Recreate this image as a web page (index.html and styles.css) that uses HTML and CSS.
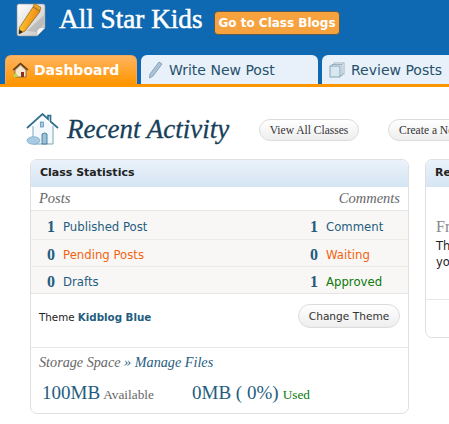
FILE: index.html
```html
<!DOCTYPE html>
<html lang="en">
<head>
<meta charset="utf-8">
<title>All Star Kids</title>
<link rel="stylesheet" href="styles.css">
</head>
<body>
<header class="masthead">
  <div class="brand">
    <svg class="logo" width="32" height="38" viewBox="0 0 32 38">
      <defs>
        <linearGradient id="paper" x1="0" y1="0" x2="1" y2="1"><stop offset="0" stop-color="#ffffff"/><stop offset="1" stop-color="#c4c4c4"/></linearGradient>
        <linearGradient id="pencil" x1="0" y1="0" x2="1" y2="0.400"><stop offset="0" stop-color="#ffd93f"/><stop offset="1" stop-color="#ec8210"/></linearGradient>
      </defs>
      <path d="M5 4h24q2 0 2 2v22l-8 8H5q-2 0-2-2V6q0-2 2-2z" fill="url(#paper)" stroke="#8f8f8f" stroke-width=".6"/>
      <path d="M31 28l-8 8q-1-6 1-8q3-1 7 0z" fill="#f6f6f6" stroke="#a5a5a5" stroke-width=".5"/>
      <path d="M30 15L13 31l9 1 8-8z" fill="#a8a8a8" opacity=".55"/>
      <path d="M19 7l7 4.500L11 31l-6 3 .500-6.500z" fill="url(#pencil)" stroke="#7a4b00" stroke-width=".6"/>
      <path d="M20.500 3.500l6.500 4-1 3.500-7-4.500z" fill="#e9a32a" stroke="#7a4b00" stroke-width=".5"/>
      <path d="M5.300 29.500l3.500 2.500-3.800 2z" fill="#222"/>
    </svg>
    <h1 class="site-title">All Star Kids</h1>
    <a class="class-blogs">Go to Class Blogs</a>
  </div>
  <nav class="tabs">
    <a class="tab tab-active">
      <svg width="17" height="16" viewBox="0 0 17 16"><path d="M3 8l5.500-5L14 8v7H3z" fill="#f3e7cf" stroke="#6b4a2a" stroke-width=".7"/><path d="M1 8l7.500-6.500L16 8" fill="none" stroke="#5a3a20" stroke-width="1.600"/><path d="M9 10h3v5H9z" fill="#8b2f1f"/><circle cx="3.500" cy="13.500" r="2" fill="#b7d84b"/></svg>
      Dashboard
    </a>
    <a class="tab tab-write">
      <svg width="15" height="18" viewBox="0 0 15 18"><path d="M11 1l3 2L5 15l-3.500 2L2 13z" fill="#a9c3d8" stroke="#6d8ea8" stroke-width=".7"/></svg>
      Write New Post
    </a>
    <a class="tab tab-review">
      <svg width="16" height="16" viewBox="0 0 16 16"><rect x="5" y="1" width="10" height="11" fill="#f3f7fa" stroke="#8aa5b8" stroke-width=".8"/><rect x="3" y="2.500" width="10" height="11" fill="#eaf1f6" stroke="#8aa5b8" stroke-width=".8"/><rect x="1" y="4" width="10" height="11" fill="#d9e7f0" stroke="#6f93aa" stroke-width=".8"/></svg>
      Review Posts
    </a>
  </nav>
</header>

<main class="content">
  <div class="page-head">
    <svg class="house" width="33" height="33" viewBox="0 0 33 33">
      <path d="M7 14L17 5l10 9v17H7z" fill="#f2f8fc"/>
      <path d="M1 15L16.500 1 22 6V2.500h2.500v6L32 15" fill="none" stroke="#2f6f8f" stroke-width="1.700"/>
      <path d="M7 13v18h20V13" fill="none" stroke="#7ea6bb" stroke-width="1"/>
      <rect x="14.500" y="9" width="3" height="5" fill="#a9cbe0" stroke="#3b7ea3" stroke-width=".6"/>
      <path d="M16 31V21q3-2 5 0v10z" fill="#9cc3da" stroke="#2f6f8f" stroke-width=".8"/>
      <ellipse cx="7.500" cy="27.500" rx="6.500" ry="3.800" fill="#a8cbe3" stroke="#6a9cbc" stroke-width=".6"/>
    </svg>
    <h2 class="page-title">Recent Activity</h2>
    <a class="pill pill-view">View All Classes</a>
    <a class="pill pill-create">Create a New Class</a>
  </div>

  <div class="columns">
    <section class="card stats">
      <h3 class="card-title">Class Statistics</h3>
      <div class="stats-head"><span>Posts</span><span>Comments</span></div>
      <div class="stat-table">
        <div class="stat-row">
          <b class="num num-left">1</b><span class="label link">Published Post</span>
          <b class="num num-right">1</b><span class="label-right link">Comment</span>
        </div>
        <div class="stat-row">
          <b class="num num-left">0</b><span class="label pending">Pending Posts</span>
          <b class="num num-right">0</b><span class="label-right pending">Waiting</span>
        </div>
        <div class="stat-row">
          <b class="num num-left">0</b><span class="label link">Drafts</span>
          <b class="num num-right">1</b><span class="label-right approved">Approved</span>
        </div>
      </div>
      <div class="theme-row">
        <span class="theme-text">Theme <b class="link">Kidblog Blue</b></span>
        <a class="pill pill-theme">Change Theme</a>
      </div>
      <div class="storage">
        <p class="storage-title">Storage Space <span class="link">» Manage Files</span></p>
        <div class="storage-values">
          <span class="avail"><span class="big">100MB</span> <small>Available</small></span>
          <span class="used"><span class="big">0MB ( 0%)</span> <small>Used</small></span>
        </div>
      </div>
    </section>

    <section class="card recent">
      <h3 class="card-title">Recent Posts</h3>
      <div class="recent-body">
        <p class="from">From the Teacher</p>
        <p class="recent-text">There are no posts<br>you can review now</p>
      </div>
      <div class="recent-foot"></div>
    </section>
  </div>
</main>
</body>
</html>
```
FILE: styles.css
```css
* { box-sizing: border-box; }
html, body { margin: 0; padding: 0; height: 424px; overflow: hidden; background: #fff; }
body { width: 449px; font-family: "DejaVu Sans", sans-serif; color: #222; }
a { display: block; }
h1, h2, h3, p { margin: 0; font-weight: normal; }

.masthead { height: 87px; background: #0f69b2; border-bottom: 3px solid #ff9600; overflow: hidden; }
.brand { height: 55px; display: flex; align-items: flex-start; }
.logo { margin-left: 14px; flex: none; }
.site-title { margin-left: 13px; width: 155px; flex: none; font: 27.200px/38px "Liberation Serif", serif; -webkit-text-stroke: .5px #fff; color: #fff; white-space: nowrap; }
.class-blogs { margin-top: 11px; width: 126px; height: 24px; background: #f6a33f; border: 1px solid #5f5a4e; border-radius: 4px; font: bold 12px/22px "DejaVu Sans", sans-serif; color: #fff; text-align: center; white-space: nowrap; }

.tabs { display: flex; gap: 4px; padding-left: 5px; height: 29px; width: 600px; }
.tab { height: 29px; border-radius: 6px 6px 0 0; display: flex; align-items: center; gap: 6px; font-size: 14px; white-space: nowrap; background: #e8f1f9; color: #26506c; }
.tab svg { flex: none; }
.tab-active { width: 132px; padding-left: 6px; background: linear-gradient(#ffb45f, #ff9600); color: #fff; font-weight: bold; border: 1px solid #f0a860; border-bottom: 0; gap: 5px; }
.tab-write { width: 177px; padding-left: 7px; }
.tab-review { width: 160px; padding-left: 7px; }

.content { padding: 26px 0 0 26px; width: 700px; }
.page-head { display: flex; align-items: center; height: 33px; }
.house { flex: none; }
.page-title { margin-left: 8px; width: 192px; flex: none; font: italic 27px/33px "Liberation Serif", serif; -webkit-text-stroke: .3px #173f5a; color: #173f5a; white-space: nowrap; }
.pill { display: block; border: 1px solid #dcdcdc; border-radius: 12px; background: linear-gradient(#fff, #eeeeee); white-space: nowrap; text-align: center; }
.pill-view { width: 100px; height: 22px; font: 11.500px/20px "Liberation Serif", serif; color: #333; }
.pill-create { width: 130px; height: 22px; margin-left: 29px; padding-left: 10px; text-align: left; font: 11.500px/20px "Liberation Serif", serif; color: #333; }

.columns { display: flex; align-items: flex-start; gap: 16px; margin: 13px 0 0 4px; }
.card { flex: none; border: 1px solid #dfdfdf; border-radius: 7px; overflow: hidden; background: #fff; }
.card-title { height: 27px; padding-left: 9px; background: linear-gradient(#ebf2fa, #d5e5f3); font: bold 11px/26px "DejaVu Sans", sans-serif; color: #222; }
.stats { width: 379px; height: 255px; }
.stats-head { height: 24px; padding: 0 8px; display: flex; justify-content: space-between; font: italic 14.500px/23px "Liberation Serif", serif; color: #666; border-bottom: 1px solid #e6e6e6; }
.stat-table { padding-top: 1px; background: #f9f7f5; border-bottom: 1px solid #e6e6e6; }
.stat-row { height: 27px; display: grid; grid-template-columns: 19px 223px 32px 70px; padding: 3px 0 0 13px; align-items: center; font-size: 11.700px; }
.stat-row + .stat-row { border-top: 1px solid #ecebe8; }
.num { font: bold 16px/20px "Liberation Serif", serif; color: #1f5d80; }
.num-left { text-align: right; padding-right: 8px; }
.num-right { text-align: right; }
.label { display: block; }
.label-right { padding-left: 8px; white-space: nowrap; }
.link { color: #1f5d80; }
.pending { color: #ef6413; }
.approved { color: #0a7a0a; }

.theme-row { height: 54px; display: flex; justify-content: space-between; align-items: flex-start; padding: 10px 8px 0 8px; border-bottom: 1px solid #e6e6e6; font-size: 10.300px; }
.theme-text { padding-top: 1px; line-height: 24px; color: #222; }
.pill-theme { width: 102px; height: 24px; font: 10.600px/22px "DejaVu Sans", sans-serif; color: #333; }

.storage { padding: 0 8px; }
.storage-title { font: italic 14.200px/28px "Liberation Serif", serif; color: #666; }
.storage-title .link { color: #1f5d80; }
.storage-values { display: flex; margin-top: 5px; align-items: baseline; padding-left: 3px; }
.avail { width: 150px; flex: none; }
.big { font: 19px/24px "Liberation Serif", serif; color: #1f5d80; }
.avail small { margin-left: -2px; font: 13.300px "Liberation Serif", serif; color: #666; }
.used small { margin-left: -1px; font: 13.300px "Liberation Serif", serif; color: #0a7a0a; }

.recent { width: 200px; height: 179px; }
.recent-body { height: 113px; border-bottom: 1px solid #e6e6e6; padding: 30px 0 0 10px; white-space: nowrap; }
.from { font: 16px/20px "Liberation Serif", serif; color: #888; }
.recent-text { font-size: 11.500px; line-height: 16px; margin-top: 1px; color: #222; }
.recent-foot { height: 38px; }
```
